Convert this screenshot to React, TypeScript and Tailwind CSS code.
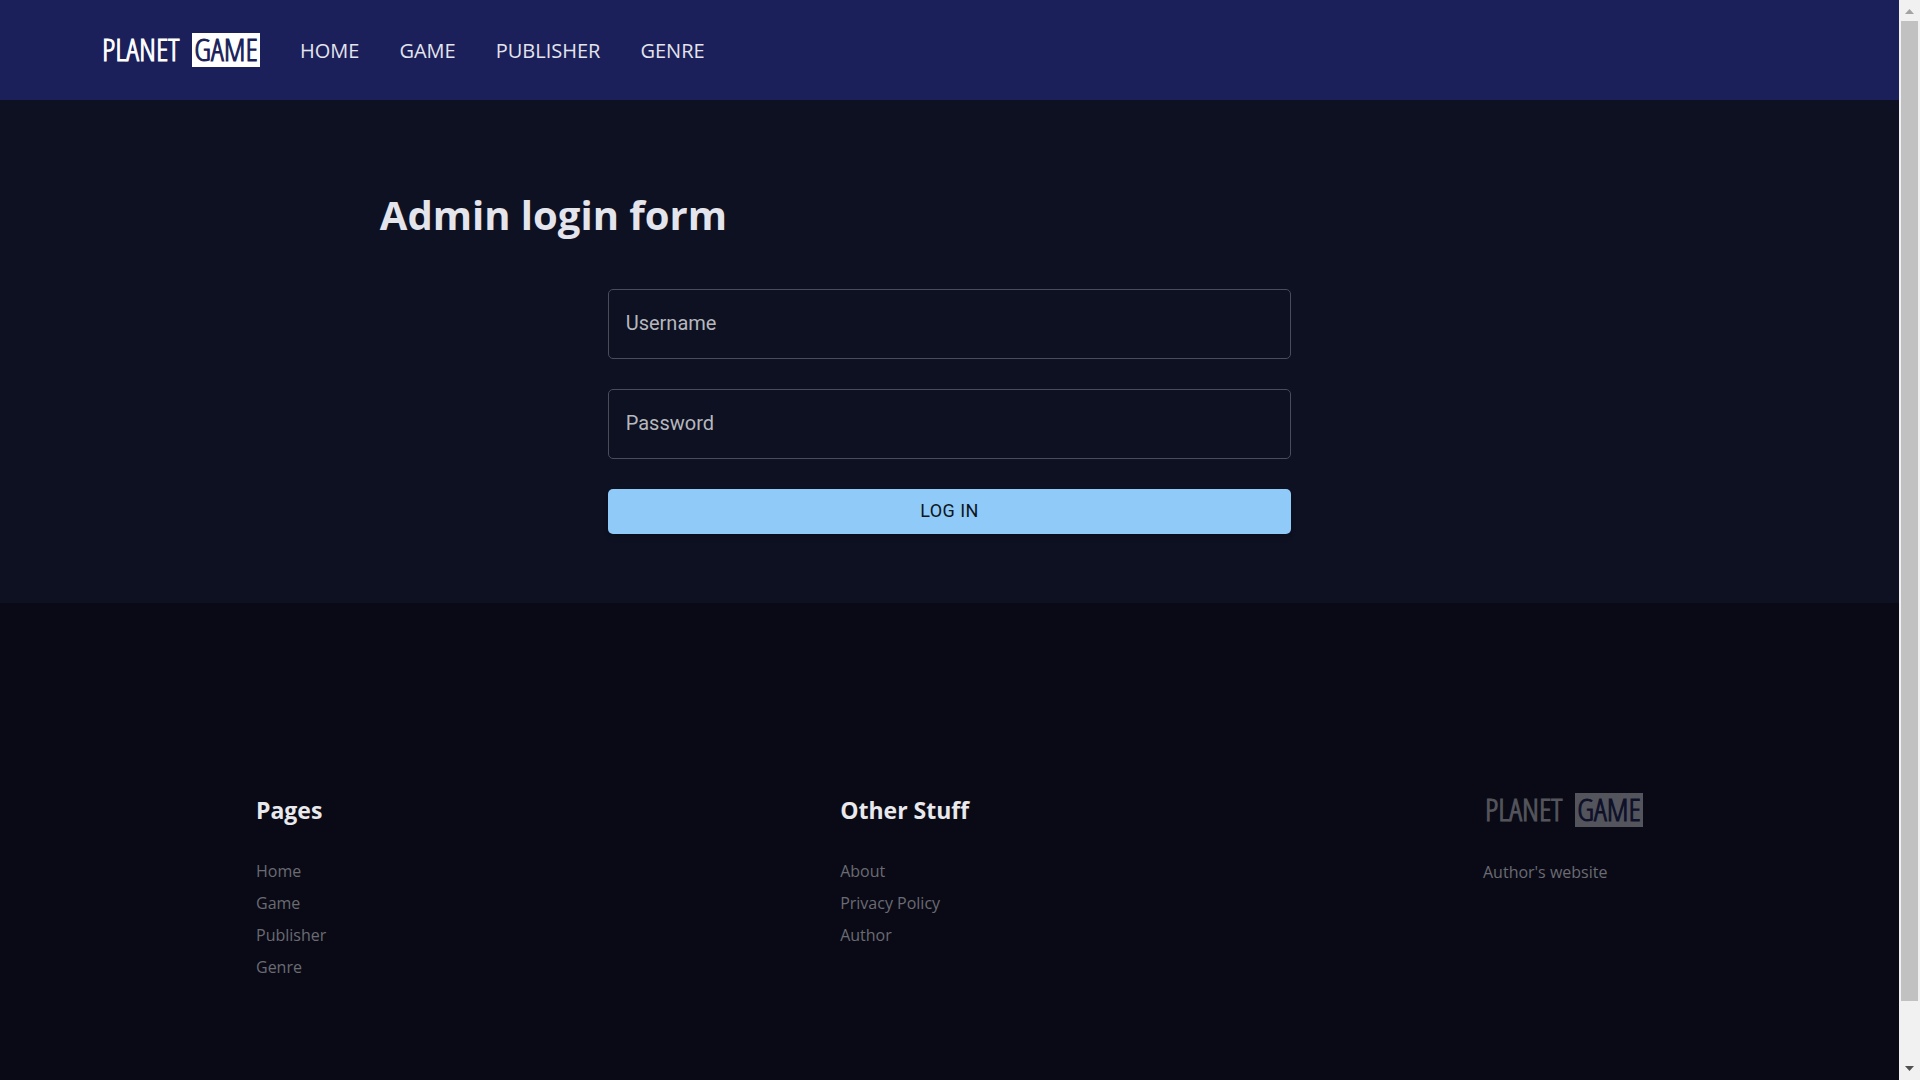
const navItems = ["Home", "Game", "Publisher", "Genre"];
const otherItems = ["About", "Privacy Policy", "Author"];

function Logo() {
  return (
    <span className="flex h-9 w-[158px] items-center justify-between whitespace-nowrap font-['Open_Sans_Condensed_Light','Open_Sans_Condensed','Liberation_Sans',sans-serif] text-[32px] leading-none font-light text-white [-webkit-text-stroke:1px_currentColor]">
      <span className="pb-0.5">PLANET</span>
      <span className="flex h-[34px] w-[68px] items-center justify-center bg-white pb-0.5 text-[#1b1f5a]">GAME</span>
    </span>
  );
}

function FooterColumn({ title, items }: { title: string; items: string[] }) {
  return (
    <nav aria-label={title}>
      <h2 className="text-[23px] leading-9 font-bold text-[#e8e8ed]">{title}</h2>
      <ul className="mt-[27px] text-base leading-8 text-[#6b6b73]">
        {items.map((item) => (
          <li key={item}>
            <a href="#">{item}</a>
          </li>
        ))}
      </ul>
    </nav>
  );
}

function Field({ id, label, type }: { id: string; label: string; type: string }) {
  return (
    <div className="relative font-[Roboto,sans-serif] text-xl">
      <input
        id={id}
        type={type}
        placeholder=" "
        className="peer block h-[70px] w-full rounded-[5px] border border-[#494c5a] bg-transparent px-4 text-white"
      />
      <label
        htmlFor={id}
        className="pointer-events-none absolute top-5 left-[18px] leading-7 text-[#b6b8bd] peer-[:not(:placeholder-shown)]:hidden"
      >
        {label}
      </label>
    </div>
  );
}

export default function App() {
  return (
    <div className="flex min-h-screen bg-[#090a15] font-['Open_Sans',sans-serif]">
      <div className="flex min-w-0 flex-1 flex-col">
        <header className="flex h-[100px] items-center gap-10 bg-[#1b1f5a] pl-[102px]">
          <a href="#">
            <Logo />
          </a>
          <nav aria-label="Main" className="flex gap-10 pt-0.5 text-xl text-[#e4e4ec] uppercase">
            {navItems.map((item) => (
              <a key={item} href="#">
                {item}
              </a>
            ))}
          </nav>
        </header>

        <main className="bg-[#0d1122] px-[20%] pt-[85px] pb-[69px]">
          <h1 className="text-[40px] leading-[60px] font-bold text-[#e4e4ec]">Admin login form</h1>
          <form className="mx-auto mt-11 flex w-3/5 flex-col gap-[30px]" onSubmit={(e) => e.preventDefault()}>
            <Field id="username" label="Username" type="text" />
            <Field id="password" label="Password" type="password" />
            <button
              type="submit"
              className="h-[45px] rounded-[5px] bg-[#90caf9] pb-0.5 font-[Roboto,sans-serif] text-lg tracking-wide text-[#0c1520] uppercase shadow-md"
            >
              Log in
            </button>
          </form>
        </main>

        <footer className="flex items-start justify-between px-64 pt-[189px]">
          <FooterColumn title="Pages" items={navItems} />
          <FooterColumn title="Other Stuff" items={otherItems} />
          <div className="w-40">
            <a href="#" className="block pl-0.5 opacity-30">
              <Logo />
            </a>
            <a href="#" className="mt-7 block text-base leading-8 text-[#6b6b73]">
              Author's website
            </a>
          </div>
        </footer>
      </div>

      <div aria-hidden="true" className="flex w-[21px] flex-col items-center bg-[#f1f1f1]">
        <svg viewBox="0 0 21 21" className="h-[21px] w-[21px]">
          <path d="M6 14h9l-4.500-5z" fill="#a3a3a3" />
        </svg>
        <div className="w-[17px] flex-[980] bg-[#c1c1c1]" />
        <div className="flex-[58]" />
        <svg viewBox="0 0 21 21" className="h-[21px] w-[21px]">
          <path d="M6 7h9l-4.500 5z" fill="#505050" />
        </svg>
      </div>
    </div>
  );
}
